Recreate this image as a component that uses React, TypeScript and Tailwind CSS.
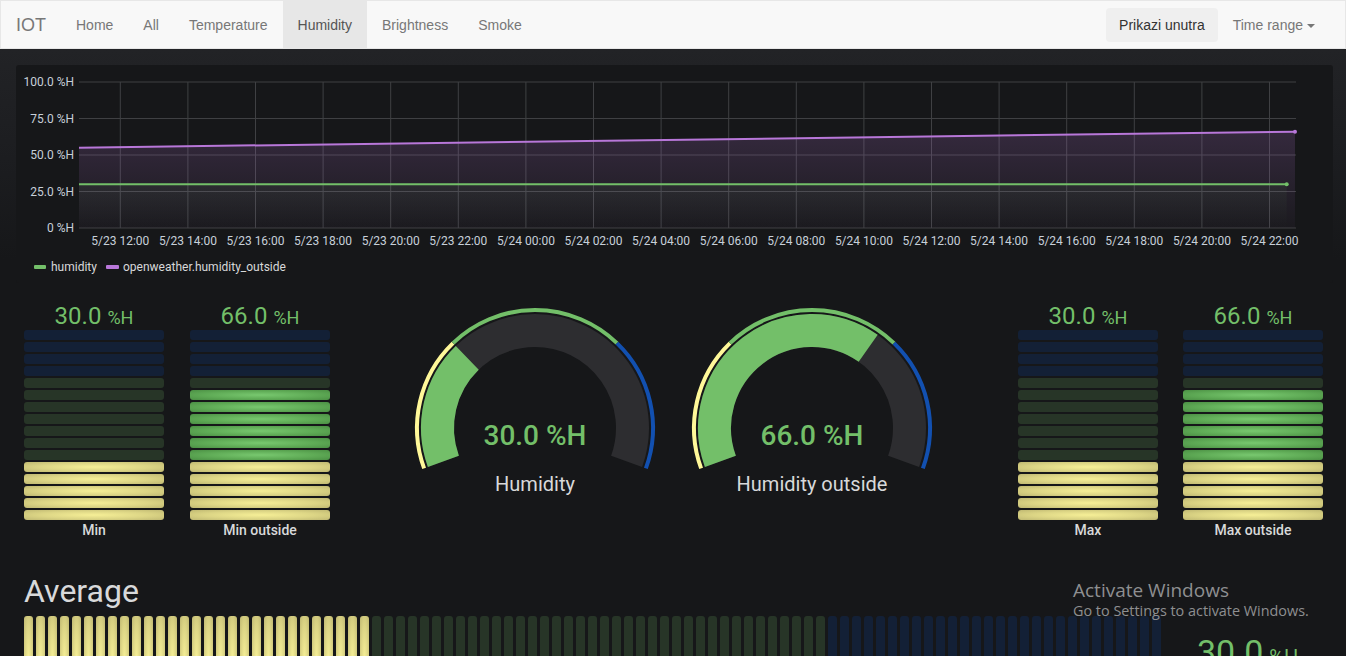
import React from "react";

const TIMES = [
  "5/23 12:00","5/23 14:00","5/23 16:00","5/23 18:00","5/23 20:00","5/23 22:00",
  "5/24 00:00","5/24 02:00","5/24 04:00","5/24 06:00","5/24 08:00","5/24 10:00",
  "5/24 12:00","5/24 14:00","5/24 16:00","5/24 18:00","5/24 20:00","5/24 22:00",
];

function Chart() {
  const W = 1317, H = 218;
  const L = 63, R = 1280, T = 17, B = 163;
  const yPos = (v: number) => B - (v / 100) * (B - T);
  const gx = (k: number) => 104.3 + 67.6 * k;
  const yTicks = [
    { v: 100, t: "100.0 %H" },
    { v: 75, t: "75.0 %H" },
    { v: 50, t: "50.0 %H" },
    { v: 25, t: "25.0 %H" },
    { v: 0, t: "0 %H" },
  ];
  const gEnd = 1270.7;
  const pStartY = yPos(55), pEndY = yPos(66), gY = yPos(30);
  return (
    <svg width={W} height={H} className="block" style={{ fontFamily: "Roboto, sans-serif" }}>
      <defs>
        <linearGradient id="pf" x1="0" y1="0" x2="0" y2="1">
          <stop offset="0%" stopColor="#b877d9" stopOpacity="0.19" />
          <stop offset="100%" stopColor="#b877d9" stopOpacity="0.03" />
        </linearGradient>
        <linearGradient id="gf" x1="0" y1="0" x2="0" y2="1">
          <stop offset="0%" stopColor="#73bf69" stopOpacity="0.07" />
          <stop offset="100%" stopColor="#73bf69" stopOpacity="0" />
        </linearGradient>
      </defs>
      {yTicks.map((y) => (
        <g key={y.v}>
          <line x1={L} x2={R} y1={yPos(y.v)} y2={yPos(y.v)} stroke="#3f4043" strokeWidth={1} />
          <text x={58} y={yPos(y.v)} textAnchor="end" dominantBaseline="central" fontSize={12} fill="#c7d0d9">
            {y.t}
          </text>
        </g>
      ))}
      {TIMES.map((t, k) => (
        <g key={t}>
          <line x1={gx(k)} x2={gx(k)} y1={T} y2={B} stroke="#3f4043" strokeWidth={1} />
          <text x={gx(k)} y={176} textAnchor="middle" dominantBaseline="central" fontSize={12} fill="#c7d0d9">
            {t}
          </text>
        </g>
      ))}
      <polygon points={`${L},${pStartY} ${R - 1},${pEndY} ${R - 1},${B} ${L},${B}`} fill="url(#pf)" />
      <polygon points={`${L},${gY} ${gEnd},${gY} ${gEnd},${B} ${L},${B}`} fill="url(#gf)" />
      <line x1={L} y1={pStartY} x2={R - 1} y2={pEndY} stroke="#b877d9" strokeWidth={2} />
      <line x1={L} y1={gY} x2={gEnd} y2={gY} stroke="#73bf69" strokeWidth={2} />
      <circle cx={gEnd} cy={gY} r={2} fill="#73bf69" />
      <circle cx={R - 1} cy={pEndY} r={2} fill="#b877d9" />
      <rect x={18} y={200} width={12} height={4} rx={1} fill="#73bf69" />
      <text x={35} y={202} dominantBaseline="central" fontSize={12} fill="#d8d9da">humidity</text>
      <rect x={90} y={200} width={13} height={4} rx={1} fill="#b877d9" />
      <text x={107} y={202} dominantBaseline="central" fontSize={12} fill="#d8d9da">openweather.humidity_outside</text>
    </svg>
  );
}

const YELLOW_LIT = "bg-[radial-gradient(ellipse_at_center,#f6ef97_0%,#dcd585_55%,#bfb872_100%)]";
const GREEN_LIT = "bg-[radial-gradient(ellipse_at_center,#78c86f_0%,#5fab56_55%,#4b8f44_100%)]";
const GREEN_OFF = "bg-[#273527]";
const BLUE_OFF = "bg-[#132036]";
const BLUE_LIT = "bg-[#1250b0]";

function cellClass(i: number, lit: number) {
  if (i < 5) return YELLOW_LIT;
  if (i < 12) return i < lit ? GREEN_LIT : GREEN_OFF;
  return i < lit ? BLUE_LIT : BLUE_OFF;
}

function BarGauge({ value, label, lit }: { value: string; label: string; lit: number }) {
  const cells = Array.from({ length: 16 }, (_, k) => 15 - k);
  return (
    <div className="w-[140px] shrink-0 flex flex-col items-center font-['Roboto',sans-serif]">
      <div className="h-[28px] leading-[28px] text-[#73bf69] whitespace-nowrap">
        <span className="text-[24px]">{value}</span>
        <span className="text-[18px] ml-[6px]">%H</span>
      </div>
      <div className="w-full flex flex-col gap-[2px]">
        {cells.map((i) => (
          <div key={i} className={`h-[10px] w-full rounded-[3px] ${cellClass(i, lit)}`} />
        ))}
      </div>
      <div className="h-[20px] leading-[20px] text-[14px] font-medium text-[#d8d9da] whitespace-nowrap">{label}</div>
    </div>
  );
}

const CX = 130, CY = 126;
function pt(r: number, deg: number) {
  const a = (deg * Math.PI) / 180;
  return [CX + r * Math.cos(a), CY - r * Math.sin(a)];
}
function arc(r: number, a1: number, a2: number) {
  const [x1, y1] = pt(r, a1);
  const [x2, y2] = pt(r, a2);
  const large = a1 - a2 > 180 ? 1 : 0;
  return `M ${x1.toFixed(2)} ${y1.toFixed(2)} A ${r} ${r} 0 ${large} 1 ${x2.toFixed(2)} ${y2.toFixed(2)}`;
}

function Gauge({ value, label }: { value: number; label: string }) {
  const start = 200, span = 220;
  const v = start - (span * value) / 100;
  return (
    <svg width={260} height={200} className="shrink-0 block" style={{ fontFamily: "Roboto, sans-serif" }}>
      <path d={arc(118, 200, 134)} stroke="#fff899" strokeWidth={4} fill="none" />
      <path d={arc(118, 134, 46)} stroke="#73bf69" strokeWidth={4} fill="none" />
      <path d={arc(118, 46, -20)} stroke="#1250b0" strokeWidth={4} fill="none" />
      <path d={arc(97.5, 200, -20)} stroke="#2d2d30" strokeWidth={33} fill="none" />
      <path d={arc(97.5, 200, v)} stroke="#73bf69" strokeWidth={33} fill="none" />
      <text x={CX} y={133} textAnchor="middle" dominantBaseline="central" fontSize={28} fontWeight={500} fill="#73bf69">
        {value.toFixed(1)} %H
      </text>
      <text x={CX} y={182} textAnchor="middle" dominantBaseline="central" fontSize={20} fill="#d8d9da">
        {label}
      </text>
    </svg>
  );
}

function AverageBar() {
  const cells = Array.from({ length: 95 }, (_, i) => i);
  const cls = (i: number) => (i < 29 ? YELLOW_LIT : i < 67 ? GREEN_OFF : BLUE_OFF);
  return (
    <div className="flex items-center">
      <div className="flex gap-[3px]">
        {cells.map((i) => (
          <div key={i} className={`w-[9px] h-[88px] rounded-[3px] ${cls(i)}`} />
        ))}
      </div>
      <div className="ml-[36px] mb-[16px] text-[#73bf69] whitespace-nowrap font-['Roboto',sans-serif]">
        <span className="text-[34px]">30.0</span>
        <span className="text-[20px] ml-[6px]">%H</span>
      </div>
    </div>
  );
}

export default function App() {
  return (
    <div className="relative h-[656px] w-[1346px] overflow-hidden bg-[#161719]">
      <nav className="h-[49px] bg-[#f8f8f8] border border-[#e7e7e7] flex items-stretch font-['Liberation_Sans',Arial,sans-serif] text-[14px]">
        <div className="px-[15px] pt-[2px] flex items-center text-[18px] text-[#777]">IOT</div>
        <a className="px-[15px] pt-[2px] flex items-center text-[#777]">Home</a>
        <a className="px-[15px] pt-[2px] flex items-center text-[#777]">All</a>
        <a className="px-[15px] pt-[2px] flex items-center text-[#777]">Temperature</a>
        <a className="px-[15px] pt-[2px] flex items-center text-[#555] bg-[#e7e7e7]">Humidity</a>
        <a className="px-[15px] pt-[2px] flex items-center text-[#777]">Brightness</a>
        <a className="px-[15px] pt-[2px] flex items-center text-[#777]">Smoke</a>
        <div className="ml-auto mr-[15px] flex items-center">
          <button className="h-[34px] px-[13px] pt-[1px] rounded-[4px] bg-[#efefef] text-[#333]">Prikazi unutra</button>
          <a className="px-[15px] pt-[2px] flex items-center text-[#777]">
            Time range
            <span className="ml-[4px] w-0 h-0 border-t-[4px] border-t-[#777] border-x-[4px] border-x-transparent" />
          </a>
        </div>
      </nav>
      <main className="bg-[linear-gradient(to_bottom,#222326_0px,#1c1d20_110px,#161719_210px)] pt-[16px]">
        <div className="mx-[16px] h-[218px] w-[1317px] rounded-[3px] bg-[#161719]">
          <Chart />
        </div>
        <div className="flex items-start pl-[24px] mt-[19px]">
          <BarGauge value="30.0" label="Min" lit={5} />
          <div className="ml-[26px]">
            <BarGauge value="66.0" label="Min outside" lit={11} />
          </div>
          <div className="ml-[75px]">
            <Gauge value={30} label="Humidity" />
          </div>
          <div className="ml-[17px]">
            <Gauge value={66} label="Humidity outside" />
          </div>
          <div className="ml-[76px]">
            <BarGauge value="30.0" label="Max" lit={5} />
          </div>
          <div className="ml-[25px]">
            <BarGauge value="66.0" label="Max outside" lit={11} />
          </div>
        </div>
        <div className="pl-[24px] mt-[31px]">
          <div className="h-[40px] leading-[40px] text-[32px] text-[#d8d9da] font-['Roboto',sans-serif]">Average</div>
          <div className="mt-[5px]">
            <AverageBar />
          </div>
        </div>
      </main>
      <div className="absolute left-[1073px] top-[579px] flex flex-col text-[#8e8f91] font-['Open_Sans','Noto_Sans',sans-serif] pointer-events-none">
        <div className="h-[22px] leading-[22px] text-[19px]">Activate Windows</div>
        <div className="h-[20px] leading-[20px] text-[14.4px]">Go to Settings to activate Windows.</div>
      </div>
    </div>
  );
}
